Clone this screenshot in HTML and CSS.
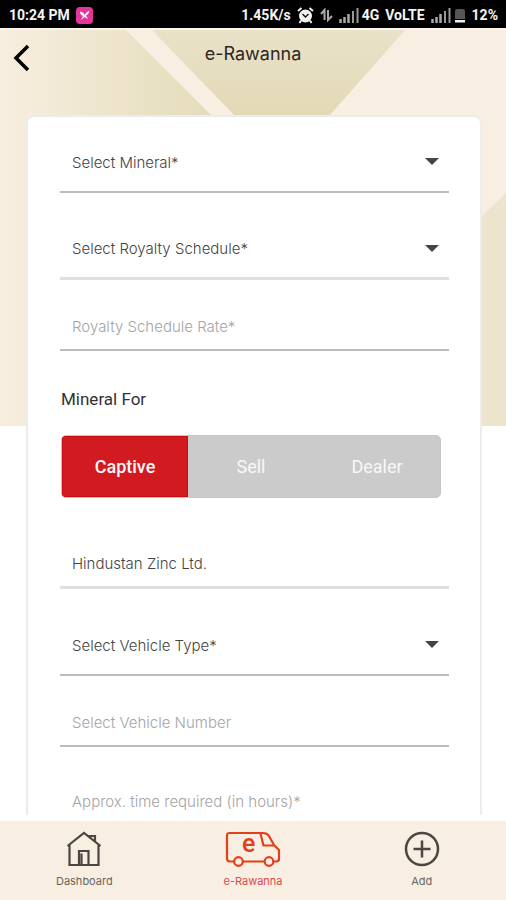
FILE: index.html
```html
<!DOCTYPE html>
<html lang="en">
<head>
<meta charset="utf-8">
<meta name="viewport" content="width=device-width, initial-scale=1">
<title>e-Rawanna</title>
<link rel="stylesheet" href="styles.css">
</head>
<body>
<div class="status">
  <span>10:24 PM</span>
  <svg class="app-badge" width="17" height="17" viewBox="0 0 17 17" aria-hidden="true">
    <rect width="17" height="17" rx="4" fill="#e5359b"/>
    <path d="M4 4.500Q8 5 8.500 8Q10 5 13.500 3.500Q13 7 10 8.500L12 12L8.500 10L5 13L7 9Q4 8 4 4.500Z" fill="#fff"/>
  </svg>
  <span class="speed">1.45K/s</span>
  <svg width="17" height="17" viewBox="0 0 17 17" aria-hidden="true">
    <path d="M1 4L4.500 1M16 4L12.500 1M4 13.500L2.500 16M13 13.500L14.500 16" stroke="#eee" stroke-width="2"/>
    <circle cx="8.500" cy="9" r="6.500" fill="#f2f2f2"/>
    <path d="M5.500 7L8.500 10L11.500 7" fill="none" stroke="#111" stroke-width="1.400"/>
  </svg>
  <svg width="13" height="14" viewBox="0 0 13 14" aria-hidden="true">
    <path d="M4.500 12V2L1 6M8 2V12L12 8" fill="none" stroke="#aaa" stroke-width="2"/>
  </svg>
  <svg class="signal" width="20" height="15" viewBox="0 0 20 15" aria-hidden="true">
    <path d="M1.500 15V11M5.500 15V9M9.500 15V6" stroke="#aaa" stroke-width="2.500"/>
    <path d="M14 15V3M18.500 15V0" stroke="#999" stroke-width="2"/>
  </svg>
  <span>4G</span>
  <span>VoLTE</span>
  <svg class="signal" width="20" height="15" viewBox="0 0 20 15" aria-hidden="true">
    <path d="M1.500 15V11M5.500 15V9M9.500 15V6" stroke="#aaa" stroke-width="2.500"/>
    <path d="M14 15V3M18.500 15V0" stroke="#999" stroke-width="2"/>
  </svg>
  <svg width="12" height="15" viewBox="0 0 12 15" aria-hidden="true">
    <path d="M1 11V2.500Q1 1 3 1H9Q11 1 11 2.500V11Z" fill="#555"/>
    <path d="M1 12H11V14.500H1Z" fill="#eee"/>
  </svg>
  <span>12%</span>
</div>

<div class="screen">
  <svg class="backdrop" viewBox="0 0 506 398" preserveAspectRatio="none" aria-hidden="true">
    <defs>
      <linearGradient id="left" x1="0" x2="1" y1="0" y2="0">
        <stop offset="0" stop-color="#f8eee0"/>
        <stop offset=".5" stop-color="#eee5cd"/>
        <stop offset="1" stop-color="#e4dcba"/>
      </linearGradient>
      <linearGradient id="middle" x1="0" x2="0" y1="0" y2="1">
        <stop offset="0" stop-color="#eae2c9"/>
        <stop offset="1" stop-color="#e2d9b6"/>
      </linearGradient>
    </defs>
    <path d="M0 0H506V398H0Z" fill="#f8eee1"/>
    <path d="M0 0H124L212 88V398H0Z" fill="url(#left)"/>
    <path d="M150 0H407L329 88H235Z" fill="url(#middle)"/>
    <path d="M506 165L481 189L440 230V398H506Z" fill="#ece4cc"/>
    <path d="M0 1H506" stroke="#fdf4ec" stroke-width="2"/>
  </svg>

  <header class="topbar">
    <button class="back" type="button" aria-label="Back">
      <svg width="20" height="30" viewBox="0 0 20 30" aria-hidden="true">
        <path d="M16 3L4 15L16 27" fill="none" stroke="#000" stroke-width="3.500"/>
      </svg>
    </button>
    <h1>e-Rawanna</h1>
  </header>

  <main class="scroller">
    <form class="card">
      <div class="field pick">
        <select aria-label="Mineral"><option>Select Mineral*</option></select>
      </div>
      <div class="field pick soft">
        <select aria-label="Royalty schedule"><option>Select Royalty Schedule*</option></select>
      </div>
      <div class="field entry">
        <input type="text" placeholder="Royalty Schedule Rate*" aria-label="Royalty schedule rate">
      </div>
      <fieldset class="choice">
        <legend>Mineral For</legend>
        <div class="segments">
          <label><input type="radio" name="purpose" checked><span>Captive</span></label>
          <label><input type="radio" name="purpose"><span>Sell</span></label>
          <label><input type="radio" name="purpose"><span>Dealer</span></label>
        </div>
      </fieldset>
      <div class="field entry soft company">
        <input type="text" value="Hindustan Zinc Ltd." aria-label="Company">
      </div>
      <div class="field pick">
        <select aria-label="Vehicle type"><option>Select Vehicle Type*</option></select>
      </div>
      <div class="field entry">
        <input type="text" placeholder="Select Vehicle Number" aria-label="Vehicle number">
      </div>
      <div class="field entry spaced">
        <input type="text" placeholder="Approx. time required (in hours)*" aria-label="Approximate time in hours">
      </div>
    </form>
  </main>
</div>

<nav class="tabs">
  <a href="#dashboard">
    <svg width="36" height="36" viewBox="0 0 36 36" fill="none" stroke="#4b4641" stroke-width="2.200" aria-hidden="true">
      <path d="M1.500 15L18 2L34.500 15M3.500 13.500V34H32.500V13.500M13 34V20H22.500V34M15.500 34V22.500"/>
      <path d="M24 6.500V5H29V10.500"/>
    </svg>
    <span>Dashboard</span>
  </a>
  <a class="active" href="#rawanna">
    <svg class="van" width="56" height="36" viewBox="0 0 56 36" fill="none" stroke="#e1401f" stroke-width="2.200" stroke-linejoin="round" aria-hidden="true">
      <path d="M9.200 30.500H5Q2 30.500 2 27.500V4.500Q2 2 4.500 2H38Q42 2 44 5L49 14L54 19V28Q54 30.500 51 30.500H48.500M39.700 30.500H18"/>
      <path d="M35.500 2.500L38.500 14.500H49"/>
      <circle cx="13.500" cy="30.500" r="4.300"/>
      <circle cx="44" cy="30.500" r="4.300"/>
      <text class="van-letter" x="17" y="21">e</text>
    </svg>
    <span>e-Rawanna</span>
  </a>
  <a href="#add">
    <svg width="36" height="36" viewBox="0 0 36 36" fill="none" stroke="#4b4641" stroke-width="2.500" aria-hidden="true">
      <circle cx="18" cy="18" r="16"/>
      <path d="M18 9.500V26.500M9.500 18H26.500"/>
    </svg>
    <span>Add</span>
  </a>
</nav>
</body>
</html>
```
FILE: styles.css
```css
* {
  box-sizing: border-box;
}

body {
  margin: 0;
  height: 100vh;
  display: flex;
  flex-direction: column;
  background: #fff;
  font-family: Inter, "Liberation Sans", sans-serif;
  font-weight: 300;
  color: #444;
}

.status {
  flex: none;
  display: flex;
  align-items: center;
  gap: 6px;
  height: 28px;
  padding: 2px 8px 0 9px;
  background: #000;
  color: #f4f4f4;
  font: 700 14px/26px Roboto, sans-serif;
}

.speed {
  margin-left: auto;
}

.signal {
  margin-right: -3px;
}

.screen {
  flex: 1;
  min-height: 0;
  display: flex;
  flex-direction: column;
  position: relative;
  margin-bottom: 6px;
}

.backdrop {
  position: absolute;
  top: 0;
  left: 0;
  z-index: -1;
  width: 100%;
  height: 398px;
}

.topbar {
  flex: none;
  display: grid;
  grid-template-columns: 48px 1fr 48px;
  align-items: center;
  height: 50px;
  margin-top: 5px;
  margin-bottom: 32px;
}

.back {
  display: flex;
  height: 48px;
  padding: 9px 12px;
  border: 0;
  background: none;
}

h1 {
  margin: 0 0 8px;
  text-align: center;
  font: 400 18px/24px Inter, sans-serif;
  color: #2b2722;
}

.scroller {
  flex: 1;
  min-height: 0;
  padding: 0 24px 0 26px;
  overflow-y: auto;
  scrollbar-width: none;
}

.card {
  padding: 16px 31px 32px 32px;
  border: 2px solid #ececee;
  border-radius: 8px;
  background: #fff;
}

.field {
  border-bottom: 2px solid #bdbdbd;
}

.field.soft {
  border-bottom: 3px solid #dfdfdf;
}

.field select,
.field input {
  display: block;
  width: 100%;
  height: 100%;
  padding: 0 12px;
  border: 0;
  outline: 0;
  background: none;
  appearance: none;
  font: inherit;
  font-size: 15px;
  color: #444;
}

.field input::placeholder {
  color: #a4a4a4;
  opacity: 1;
}

.pick {
  position: relative;
  height: 60px;
}

.pick::after {
  content: "";
  position: absolute;
  top: 25px;
  right: 10px;
  border: 7px solid transparent;
  border-top-color: #444;
  border-bottom: 0;
  pointer-events: none;
}

.field + .pick {
  margin-top: 27px;
}

.entry {
  height: 48px;
  margin-top: 23px;
}

.spaced {
  margin-top: 31px;
}

.choice {
  margin: 36px 0 0;
  padding: 0 8px 0 1px;
  border: 0;
  min-width: 0;
}

legend {
  padding: 0;
  margin-bottom: 24px;
  font: 400 17px/24px Roboto, sans-serif;
  color: #333;
}

.segments {
  display: grid;
  grid-template-columns: repeat(3, 1fr);
  height: 63px;
  border: 1px solid #c6c6c6;
  border-radius: 5px;
  overflow: hidden;
  background: #cbcbcb;
}

.segments label {
  display: grid;
}

.segments input {
  appearance: none;
  margin: 0;
  grid-area: 1 / 1;
}

.segments span {
  grid-area: 1 / 1;
  display: grid;
  place-items: center;
  font: 400 18px/24px Roboto, sans-serif;
  color: #f8f8f8;
}

.segments input:checked + span {
  border: 1px solid #c80d12;
  background: #d11b20;
  font-weight: 500;
}

.company {
  margin-top: 43px;
}

.tabs {
  flex: none;
  display: grid;
  grid-template-columns: repeat(3, 1fr);
  height: 79px;
  padding-top: 10px;
  background: #f8eee1;
}

.tabs a {
  display: flex;
  flex-direction: column;
  align-items: center;
  gap: 6px;
  font-size: 11px;
  line-height: 16px;
  font-weight: 400;
  color: #6b655e;
  text-decoration: none;
}

.tabs .active {
  color: #dd4a50;
}

.van {
  overflow: visible;
}

.van-letter {
  font: 500 25px Roboto, sans-serif;
  fill: #e1401f;
  stroke: none;
}
```
